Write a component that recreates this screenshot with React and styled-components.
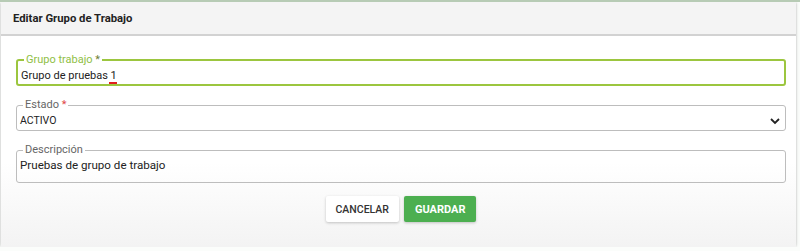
import React from 'react';
import styled, { createGlobalStyle } from 'styled-components';

const GlobalStyle = createGlobalStyle`
  html, body {
    margin: 0;
    padding: 0;
    background: #fbfdfb;
    font-family: Roboto, "Liberation Sans", sans-serif;
  }
  body {
    border-top: 2px solid #b7cbb5;
  }
`;

const Modal = styled.div`
  margin: 0 4px 0 1px;
  height: 245px;
  display: flex;
  flex-direction: column;
  background: #fff;
  border-radius: 0 0 4px 4px;
  box-shadow: 0 1px 2px rgba(0, 0, 0, 0.25), 0 0 4px rgba(0, 0, 0, 0.12);
`;

const Header = styled.div`
  height: 32px;
  display: flex;
  align-items: center;
  padding: 0 12px;
  background: #f4f4f4;
  border-bottom: 2px solid #d2d2d2;
  font-size: 11.3px;
  font-weight: 700;
  color: #222;
`;

const Body = styled.div`
  flex: 1;
  display: flex;
  flex-direction: column;
  padding: 18px 10px 0 15px;
  background: linear-gradient(#fff 60%, #f3f3f3);
`;

const Field = styled.fieldset`
  margin: 0 0 13px;
  padding: 0 3px;
  min-width: 0;
  height: ${p => p.$h}px;
  box-sizing: border-box;
  border: ${p => (p.$active ? '2px solid #9cc63f' : '1px solid #bdbdbd')};
  border-radius: 3px;
  display: flex;
  align-items: flex-start;
`;

const Legend = styled.legend`
  margin-left: 3px;
  padding: 0 2px;
  font-size: 11px;
  line-height: 12px;
  color: ${p => (p.$active ? '#8fc046' : '#666')};
`;

const Star = styled.span`
  color: ${p => (p.$active ? '#6f7f35' : '#e04848')};
`;

const Value = styled.div`
  flex: 1;
  font-size: ${p => p.$size}px;
  line-height: 14px;
  color: #222;
  padding-top: ${p => p.$pt || 0}px;
`;

const Misspelled = styled.span`
  border-bottom: 2px solid #e02020;
  padding-left: 2px;
  margin-left: -2px;
`;

const Chevron = styled.svg`
  width: 12px;
  height: 12px;
  margin: 4px 1px 0 0;
`;

const Actions = styled.div`
  display: flex;
  justify-content: center;
  gap: 5px;
`;

const Button = styled.button`
  height: 26px;
  padding: 0 ${p => (p.$primary ? 11 : 10)}px;
  border: none;
  border-radius: 2px;
  font-family: Roboto, "Liberation Sans", sans-serif;
  font-size: ${p => (p.$primary ? 11 : 10.5)}px;
  font-weight: ${p => (p.$primary ? 700 : 500)};
  color: ${p => (p.$primary ? '#fff' : '#333')};
  background: ${p => (p.$primary ? '#4caf50' : '#fff')};
  box-shadow: 0 1px 3px rgba(0, 0, 0, 0.22);
`;

export default function App() {
  return (
    <>
      <GlobalStyle />
      <Modal>
        <Header>Editar Grupo de Trabajo</Header>
        <Body>
          <Field $active $h={32}>
            <Legend $active>
              Grupo trabajo <Star $active>*</Star>
            </Legend>
            <Value $size={11} $pt={3}>
              Grupo de pruebas <Misspelled>1</Misspelled>
            </Value>
          </Field>
          <Field $h={32}>
            <Legend>
              Estado <Star>*</Star>
            </Legend>
            <Value $size={10.5} $pt={3}>ACTIVO</Value>
            <Chevron viewBox="0 0 12 12">
              <path d="M2 4l4 4 4-4" fill="none" stroke="#222" strokeWidth="1.8" />
            </Chevron>
          </Field>
          <Field $h={39}>
            <Legend>Descripción</Legend>
            <Value $size={11.6} $pt={2}>Pruebas de grupo de trabajo</Value>
          </Field>
          <Actions>
            <Button>CANCELAR</Button>
            <Button $primary>GUARDAR</Button>
          </Actions>
        </Body>
      </Modal>
    </>
  );
}
